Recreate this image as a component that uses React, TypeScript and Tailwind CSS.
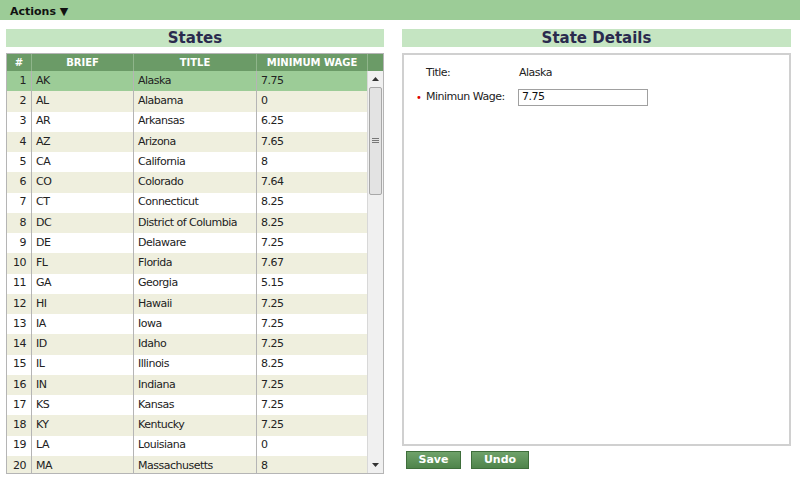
import React from 'react';

const states: [string, string, string][] = [
  ['AK', 'Alaska', '7.75'],
  ['AL', 'Alabama', '0'],
  ['AR', 'Arkansas', '6.25'],
  ['AZ', 'Arizona', '7.65'],
  ['CA', 'California', '8'],
  ['CO', 'Colorado', '7.64'],
  ['CT', 'Connecticut', '8.25'],
  ['DC', 'District of Columbia', '8.25'],
  ['DE', 'Delaware', '7.25'],
  ['FL', 'Florida', '7.67'],
  ['GA', 'Georgia', '5.15'],
  ['HI', 'Hawaii', '7.25'],
  ['IA', 'Iowa', '7.25'],
  ['ID', 'Idaho', '7.25'],
  ['IL', 'Illinois', '8.25'],
  ['IN', 'Indiana', '7.25'],
  ['KS', 'Kansas', '7.25'],
  ['KY', 'Kentucky', '7.25'],
  ['LA', 'Louisiana', '0'],
  ['MA', 'Massachusetts', '8'],
];

const font = { fontFamily: '"DejaVu Sans", Verdana, sans-serif' };

export default function App() {
  return (
    <div className="w-[800px] h-[481px] bg-white text-[11px] tracking-[-0.5px] text-[#222] overflow-hidden" style={font}>
      {/* Top bar */}
      <div className="h-[20px] bg-[#9ccc97] flex items-center pl-[10px] pt-[4px]">
        <span className="font-bold text-[#111] tracking-normal text-[11px]">Actions ▼</span>
      </div>

      <div className="flex pl-[6px] pt-[9px]">
        {/* States */}
        <div className="w-[378px] flex flex-col">
          <div className="h-[18px] bg-[#c5e5c2] flex items-center justify-center">
            <span className="text-[15px] font-bold text-[#2a2a4e] tracking-normal">States</span>
          </div>
          <div className="mt-[6px] border border-[#b5b5b5] h-[421px] flex flex-col">
            <div className="h-[17px] shrink-0 flex bg-[#6b9b67] text-white font-bold text-[10px] tracking-normal">
              <div className="w-[25px] flex items-center justify-center border-r border-[#8fb58b]">#</div>
              <div className="w-[102px] flex items-center justify-center border-r border-[#8fb58b]">BRIEF</div>
              <div className="w-[123px] flex items-center justify-center border-r border-[#8fb58b]">TITLE</div>
              <div className="w-[111px] flex items-center justify-center border-r border-[#8fb58b]">MINIMUM WAGE</div>
              <div className="flex-1"></div>
            </div>
            <div className="flex flex-1 min-h-0">
              <div className="w-[360px] flex flex-col overflow-hidden">
                {states.map(([brief, title, wage], i) => {
                  const bg = i === 0 ? 'bg-[#9ccc97]' : i % 2 === 1 ? 'bg-[#efefde]' : 'bg-white';
                  return (
                    <div key={brief} className={`h-[20.25px] shrink-0 flex items-center ${bg}`}>
                      <div className="w-[25px] h-full flex items-center justify-end pr-[5px] border-r border-[#b5b5b5]">{i + 1}</div>
                      <div className="w-[102px] h-full flex items-center pl-[4px] border-r border-[#b5b5b5]">{brief}</div>
                      <div className="w-[123px] h-full flex items-center pl-[4px] border-r border-[#b5b5b5]">{title}</div>
                      <div className="flex-1 h-full flex items-center pl-[4px]">{wage}</div>
                    </div>
                  );
                })}
              </div>
              {/* Scrollbar */}
              <div className="flex-1 bg-[#f0f0f0] border-l border-[#d8d8d8] flex flex-col items-center">
                <div className="h-[16px] flex items-center justify-center">
                  <svg width="7" height="4" viewBox="0 0 7 4"><path d="M0 4 L3.5 0 L7 4 Z" fill="#333" /></svg>
                </div>
                <div className="w-[13px] h-[108px] bg-[#e3e3e3] border border-[#a8a8a8] rounded-[2px] flex items-center justify-center">
                  <svg width="7" height="6" viewBox="0 0 7 6">
                    <path d="M0 0.5 H7 M0 2.5 H7 M0 4.5 H7" stroke="#777" strokeWidth="1" />
                  </svg>
                </div>
                <div className="flex-1"></div>
                <div className="h-[16px] flex items-center justify-center">
                  <svg width="7" height="4" viewBox="0 0 7 4"><path d="M0 0 L3.5 4 L7 0 Z" fill="#333" /></svg>
                </div>
              </div>
            </div>
          </div>
        </div>

        {/* State details */}
        <div className="w-[389px] ml-[18px] flex flex-col">
          <div className="h-[18px] bg-[#c5e5c2] flex items-center justify-center">
            <span className="text-[15px] font-bold text-[#2a2a4e] tracking-normal">State Details</span>
          </div>
          <div className="mt-[6px] h-[393px] border-2 border-[#d0d0d0] pt-[9px] pl-[22px]">
            <div className="flex items-center h-[18px]">
              <div className="w-[93px]">Title:</div>
              <div>Alaska</div>
            </div>
            <div className="flex items-center h-[18px] mt-[6px] relative">
              <span className="absolute left-[-10px] text-[#d00] text-[10px]">•</span>
              <div className="w-[92px]">Minimun Wage:</div>
              <div className="w-[130px] h-[17px] border border-[#a0a0a0] flex items-center pl-[3px] text-[#111]">7.75</div>
            </div>
          </div>
          <div className="flex mt-[5px] ml-[4px] gap-[10px]">
            <button className="w-[55px] h-[18px] bg-gradient-to-b from-[#6fa26a] to-[#4f844b] border border-[#3f6e3b] text-white font-bold text-[11px] tracking-normal">Save</button>
            <button className="w-[58px] h-[18px] bg-gradient-to-b from-[#6fa26a] to-[#4f844b] border border-[#3f6e3b] text-white font-bold text-[11px] tracking-normal">Undo</button>
          </div>
        </div>
      </div>
    </div>
  );
}
